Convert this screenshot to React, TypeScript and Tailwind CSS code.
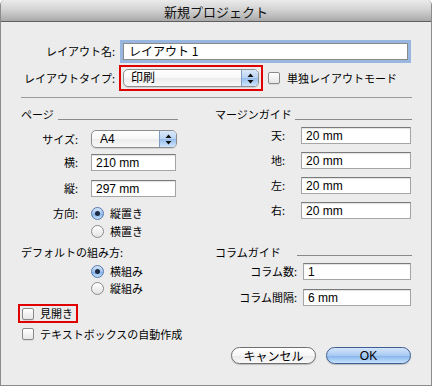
import React from "react";

const jp = "font-['Noto_Sans_CJK_JP',sans-serif]";
const inputFont = "font-['Liberation_Sans','Noto_Sans_CJK_JP',sans-serif]";

function Arrows() {
  return (
    <svg width="7" height="11" viewBox="0 0 7 11">
      <path d="M3.5 0.5 L6.5 4 L0.5 4 Z" fill="#111" />
      <path d="M3.5 10.5 L6.5 7 L0.5 7 Z" fill="#111" />
    </svg>
  );
}

function Popup({ label, wide }: { label: string; wide: boolean }) {
  return (
    <div
      className={`${wide ? "w-[136px]" : "w-[86px]"} h-[18px] flex rounded-[5px] border border-[#8e8e8e] overflow-hidden bg-[linear-gradient(to_bottom,#ffffff_0%,#f7f7f7_50%,#ececec_51%,#f8f8f8_100%)] shadow-[0_1px_1px_rgba(0,0,0,0.12)]`}
    >
      <div className={`flex-1 flex items-center ${wide ? "pl-[7px]" : "pl-[8px]"} text-[12px] leading-none text-black ${inputFont}`}>
        {label}
      </div>
      <div className="w-[17px] border-l border-[#7f9cc4] bg-[linear-gradient(to_bottom,#dbe9fa_0%,#b7d3f3_50%,#95bdeb_51%,#cfe5fb_100%)] flex items-center justify-center">
        <Arrows />
      </div>
    </div>
  );
}

function TextInput({ value, w }: { value: string; w: string }) {
  return (
    <div
      className={`${w} h-[17px] bg-white border border-[#a5a5a5] border-t-[#7a7a7a] shadow-[inset_0_1px_1px_rgba(0,0,0,0.12)] flex items-center pl-[4px] text-[12px] leading-none text-black ${inputFont}`}
    >
      {value}
    </div>
  );
}

function Checkbox() {
  return (
    <div className="w-[12px] h-[12px] shrink-0 rounded-[2px] border border-[#8a8a8a] bg-[linear-gradient(to_bottom,#ffffff,#e6e6e6)] shadow-[0_1px_0_rgba(0,0,0,0.08)]" />
  );
}

function Radio({ on }: { on: boolean }) {
  if (on)
    return (
      <div className="w-[13px] h-[13px] shrink-0 rounded-full border border-[#5779ad] bg-[linear-gradient(to_bottom,#d6e6f9_0%,#9fc3ee_50%,#7fb0ea_51%,#c4ddf8_100%)] flex items-center justify-center">
        <div className="w-[5px] h-[5px] rounded-full bg-[#1d2c44]" />
      </div>
    );
  return (
    <div className="w-[13px] h-[13px] shrink-0 rounded-full border border-[#8c8c8c] bg-[linear-gradient(to_bottom,#ffffff,#e3e3e3)]" />
  );
}

export default function App() {
  return (
    <div className={`w-[432px] h-[386px] bg-[#ececec] border-l border-r border-b border-[#8c8c8c] rounded-t-[5px] overflow-hidden flex flex-col text-[11px] text-black ${jp}`}>
      {/* Title bar */}
      <div className="h-[22px] shrink-0 border-b border-[#5f5f5f] bg-[linear-gradient(to_bottom,#ebebeb_0%,#d3d3d3_45%,#b9b9b9_80%,#a8a8a8_100%)] flex items-center justify-center">
        <span className="text-[13px] leading-none text-[#111] pt-[1px]">新規プロジェクト</span>
      </div>

      {/* Row 1 */}
      <div className="mt-[18px] h-[22px] flex items-center">
        <div className="w-[114px] text-right leading-none">レイアウト名:</div>
        <div className="ml-[8px] w-[285px] h-[17px] bg-white border border-[#8a8a8a] shadow-[0_0_0_3px_rgba(124,164,220,0.75)] flex items-center pl-[5px] text-[12px] leading-none text-black">
          <span className={jp}>レイアウト 1</span>
        </div>
      </div>

      {/* Row 2 */}
      <div className="mt-[3px] h-[26px] flex items-center">
        <div className="w-[114px] text-right leading-none">レイアウトタイプ:</div>
        <div className="ml-[4px] border-2 border-[#e00000] p-[2px] flex">
          <Popup label="印刷" wide={true} />
        </div>
        <div className="ml-[5px] flex items-center gap-[7px]">
          <Checkbox />
          <span className="leading-none">単独レイアウトモード</span>
        </div>
      </div>

      {/* Separator */}
      <div className="mt-[6px] ml-[20px] w-[391px] h-px bg-[#9a9a9a] shrink-0" />

      {/* Columns */}
      <div className="flex">
        {/* Left column */}
        <div className="ml-[20px] w-[174px] flex flex-col">
          <div className="mt-[9px] h-[14px] flex items-end">
            <span className="w-[37px] leading-[14px]">ページ</span>
            <div className="w-[120px] h-px bg-[#8a8a8a] mb-px" />
          </div>
          <div className="mt-[9px] h-[18px] flex items-center">
            <span className="w-[57px] text-right leading-none">サイズ:</span>
            <div className="ml-[13px]">
              <Popup label="A4" wide={false} />
            </div>
          </div>
          <div className="mt-[6px] h-[17px] flex items-center">
            <span className="w-[57px] text-right leading-none">横:</span>
            <div className="ml-[13px]">
              <TextInput value="210 mm" w="w-[85px]" />
            </div>
          </div>
          <div className="mt-[9px] h-[17px] flex items-center">
            <span className="w-[57px] text-right leading-none">縦:</span>
            <div className="ml-[13px]">
              <TextInput value="297 mm" w="w-[85px]" />
            </div>
          </div>
          <div className="mt-[9px] h-[14px] flex items-center">
            <span className="w-[57px] text-right leading-none">方向:</span>
            <div className="ml-[13px] flex items-center gap-[6px]">
              <Radio on={true} />
              <span className="leading-none">縦置き</span>
            </div>
          </div>
          <div className="mt-[4px] h-[14px] flex items-center">
            <div className="ml-[70px] flex items-center gap-[6px]">
              <Radio on={false} />
              <span className="leading-none">横置き</span>
            </div>
          </div>
          <div className="mt-[7px] h-[14px] flex items-center">
            <span className="leading-none">デフォルトの組み方:</span>
          </div>
          <div className="mt-[5px] h-[14px] flex items-center">
            <div className="ml-[70px] flex items-center gap-[6px]">
              <Radio on={true} />
              <span className="leading-none">横組み</span>
            </div>
          </div>
          <div className="mt-[3px] h-[14px] flex items-center">
            <div className="ml-[70px] flex items-center gap-[6px]">
              <Radio on={false} />
              <span className="leading-none">縦組み</span>
            </div>
          </div>
          <div className="mt-[9px] h-[19px] flex">
            <div className="-ml-[3px] border-2 border-[#e00000] pl-[2px] pr-[3px] flex items-center gap-[6px]">
              <Checkbox />
              <span className="leading-none">見開き</span>
            </div>
          </div>
          <div className="mt-[5px] h-[12px] flex items-center">
            <div className="ml-[1px] flex items-center gap-[6px]">
              <Checkbox />
              <span className="leading-none">テキストボックスの自動作成</span>
            </div>
          </div>
        </div>

        {/* Right column */}
        <div className="ml-[20px] w-[197px] flex flex-col">
          <div className="mt-[9px] h-[14px] flex items-end">
            <span className="w-[80px] leading-[14px]">マージンガイド</span>
            <div className="w-[117px] h-px bg-[#8a8a8a] mb-px" />
          </div>
          {[
            ["天:", "mt-[6px]"],
            ["地:", "mt-[8px]"],
            ["左:", "mt-[8px]"],
            ["右:", "mt-[8px]"],
          ].map(([l, m]) => (
            <div key={l} className={`${m} h-[17px] flex items-center`}>
              <span className="w-[70px] text-right leading-none">{l}</span>
              <div className="ml-[16px]">
                <TextInput value="20 mm" w="w-[110px]" />
              </div>
            </div>
          ))}
          <div className="mt-[26px] h-[14px] flex items-end">
            <span className="w-[82px] leading-[14px]">コラムガイド</span>
            <div className="w-[115px] h-px bg-[#8a8a8a] mb-[3px]" />
          </div>
          <div className="mt-[4px] h-[17px] flex items-center">
            <span className="w-[82px] text-right leading-none">コラム数:</span>
            <div className="ml-[6px]">
              <TextInput value="1" w="w-[108px]" />
            </div>
          </div>
          <div className="mt-[9px] h-[17px] flex items-center">
            <span className="w-[82px] text-right leading-none">コラム間隔:</span>
            <div className="ml-[6px]">
              <TextInput value="6 mm" w="w-[108px]" />
            </div>
          </div>
        </div>
      </div>

      {/* Buttons */}
      <div className="mt-[7px] flex justify-end pr-[20px] gap-[10px]">
        <div className="w-[85px] h-[17px] rounded-full border border-[#6f6f6f] bg-[linear-gradient(to_bottom,#ffffff_0%,#f6f6f6_50%,#e9e9e9_51%,#fafafa_100%)] shadow-[0_1px_1px_rgba(0,0,0,0.2)] flex items-center justify-center text-[12px] leading-none text-black">
          キャンセル
        </div>
        <div className="w-[85px] h-[17px] rounded-full border border-[#3e5e92] bg-[linear-gradient(to_bottom,#d4e5fa_0%,#a8caf1_50%,#82b3ec_51%,#c8e3fd_100%)] shadow-[0_1px_1px_rgba(0,0,0,0.2)] flex items-center justify-center text-[12px] leading-none text-black">
          <span className={inputFont}>OK</span>
        </div>
      </div>
    </div>
  );
}
